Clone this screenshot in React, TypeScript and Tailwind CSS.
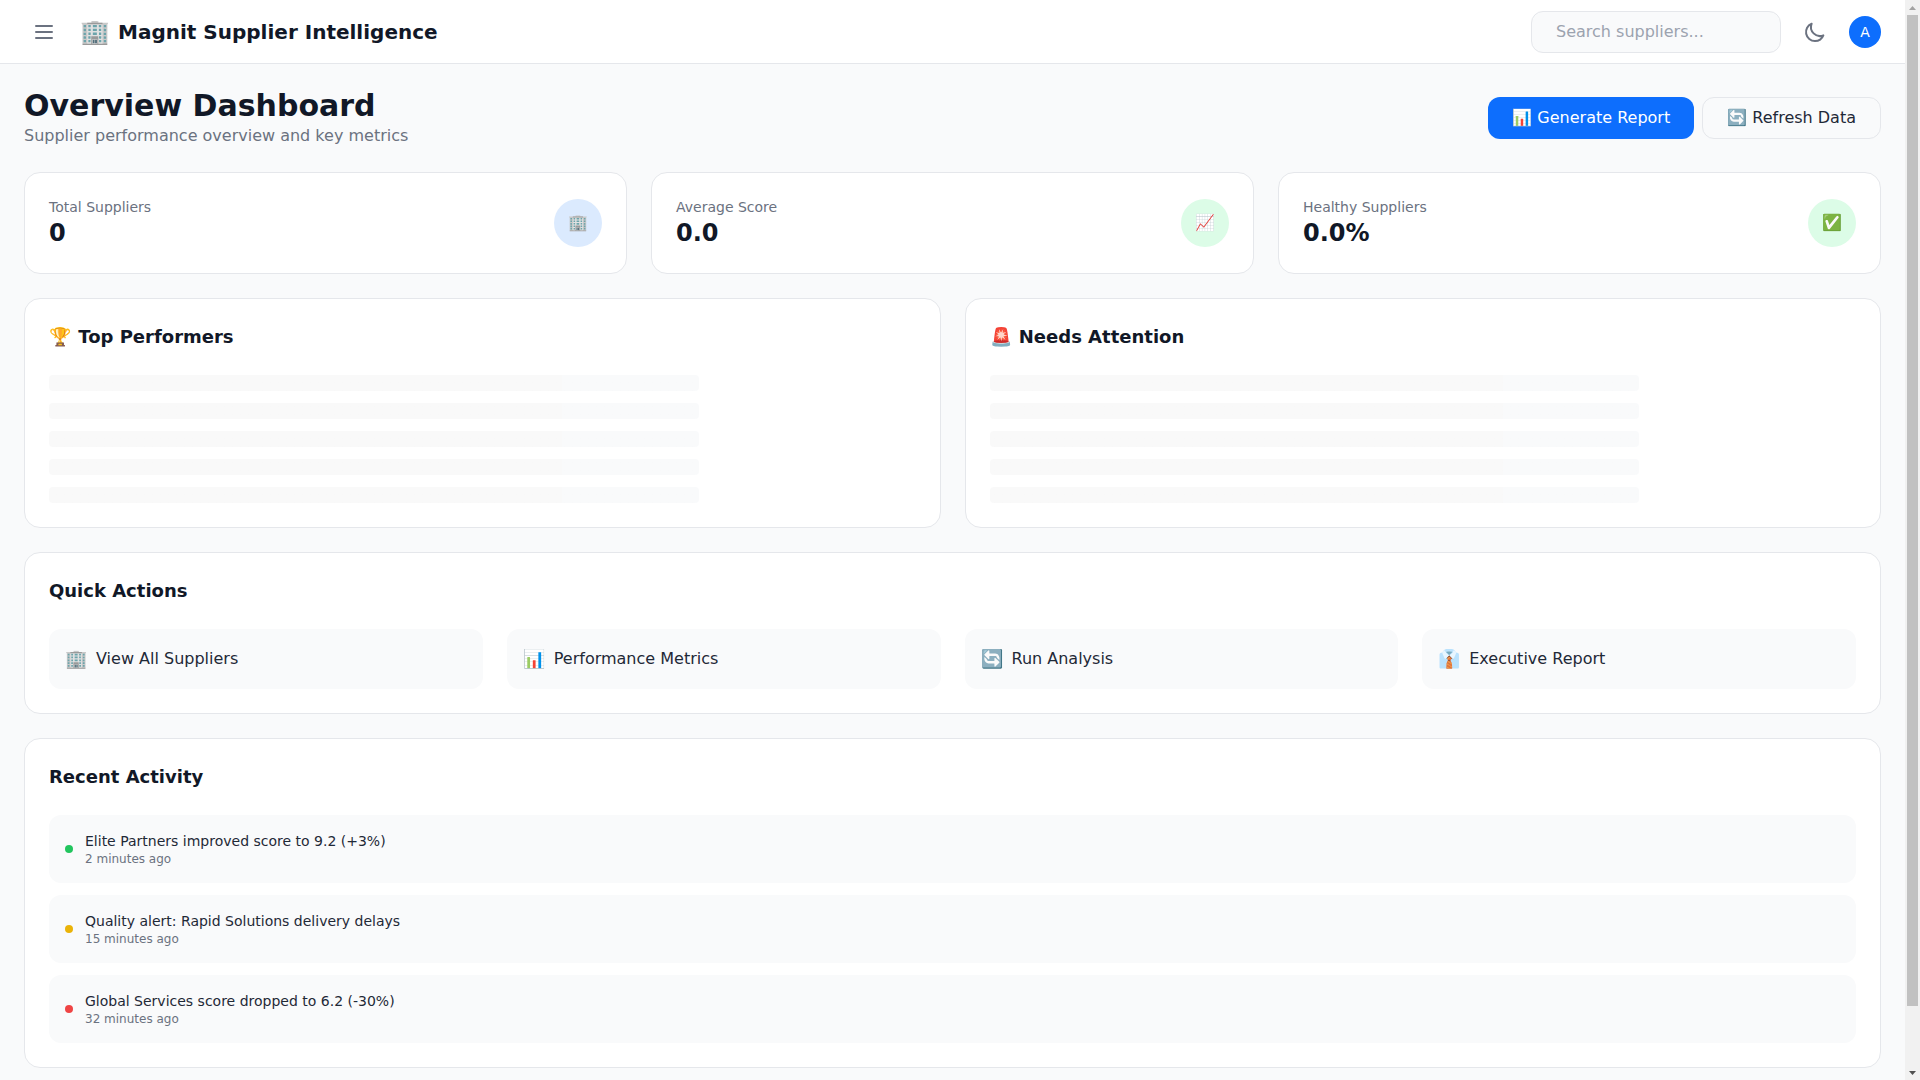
import type { ReactNode } from "react";

const Card = ({ className = "", children }: { className?: string; children: ReactNode }) => (
  <div className={`bg-white border border-[#e5e7eb] rounded-2xl p-6 ${className}`}>{children}</div>
);

const Skeletons = () => (
  <div className="flex flex-col gap-3">
    {[0, 1, 2, 3, 4].map((i) => (
      <div
        key={i}
        className="h-4 w-3/4 rounded bg-linear-to-r from-[#f9f9f9] from-[79%] to-[#f9fafb] to-[79%]"
      />
    ))}
  </div>
);

// the window's scrollbar as it stands in the picture
const Scrollbar = () => (
  <div className="w-[15px] shrink-0 h-full flex flex-col bg-[#f1f1f1]">
    <div className="h-[15px] shrink-0 flex items-center justify-center">
      <svg width="7" height="4" viewBox="0 0 7 4">
        <path d="M3.5 0L7 4H0z" fill="#a3a3a3" />
      </svg>
    </div>
    <div className="h-[991px] mx-[2px] bg-[#c1c1c1]" />
    <div className="flex-1" />
    <div className="h-[15px] shrink-0 flex items-center justify-center">
      <svg width="7" height="4" viewBox="0 0 7 4">
        <path d="M0 0H7L3.5 4z" fill="#505050" />
      </svg>
    </div>
  </div>
);

const stats = [
  { label: "Total Suppliers", value: "0", icon: "🏢", bg: "bg-[#dbeafe]" },
  { label: "Average Score", value: "0.0", icon: "📈", bg: "bg-[#dcfce7]" },
  { label: "Healthy Suppliers", value: "0.0%", icon: "✅", bg: "bg-[#dcfce7]" },
];

const actions = [
  { icon: "🏢", label: "View All Suppliers" },
  { icon: "📊", label: "Performance Metrics" },
  { icon: "🔄", label: "Run Analysis" },
  { icon: "👔", label: "Executive Report" },
];

const activity = [
  { dot: "bg-[#22c55e]", text: "Elite Partners improved score to 9.2 (+3%)", time: "2 minutes ago" },
  { dot: "bg-[#eab308]", text: "Quality alert: Rapid Solutions delivery delays", time: "15 minutes ago" },
  { dot: "bg-[#ef4444]", text: "Global Services score dropped to 6.2 (-30%)", time: "32 minutes ago" },
];

export default function App() {
  return (
    <div className="h-screen flex overflow-hidden bg-[#f9fafb] text-[#111827] font-['DejaVu_Sans',sans-serif]">
      <div className="flex-1 min-w-0 h-full overflow-hidden">
        <header className="h-16 bg-white border-b border-[#e5e7eb] px-6 flex items-center justify-between">
          <div className="flex items-center gap-4">
            <button className="p-2 text-[#6b7280]">
              <svg className="w-6 h-6" fill="none" viewBox="0 0 24 24" stroke="currentColor" strokeWidth={2}>
                <path strokeLinecap="round" strokeLinejoin="round" d="M4 6h16M4 12h16M4 18h16" />
              </svg>
            </button>
            <div className="flex items-center gap-2 text-xl font-bold">
              <span className="text-2xl">🏢</span>
              <span>Magnit Supplier Intelligence</span>
            </div>
          </div>
          <div className="flex items-center gap-4">
            <input
              placeholder="Search suppliers..."
              className="w-[250px] h-[42px] px-6 bg-[#f9fafb] border border-[#e5e7eb] rounded-xl text-base placeholder:text-[#9ca3af] outline-none"
            />
            <button className="w-9 h-9 flex items-center justify-center text-[#6b7280]">
              <svg className="w-6 h-6" fill="none" viewBox="0 0 24 24" stroke="currentColor" strokeWidth={2}>
                <path strokeLinecap="round" strokeLinejoin="round" d="M20.354 15.354A9 9 0 018.646 3.646 9.003 9.003 0 0012 21a9.003 9.003 0 008.354-5.646z" />
              </svg>
            </button>
            <div className="w-8 h-8 rounded-full bg-[#0d6efd] text-white text-sm flex items-center justify-center">A</div>
          </div>
        </header>

        <main className="p-6">
          <div className="flex items-center justify-between mb-6">
            <div>
              <h1 className="text-3xl font-bold">Overview Dashboard</h1>
              <p className="text-[#6b7280]">Supplier performance overview and key metrics</p>
            </div>
            <div className="flex gap-2">
              <button className="px-6 py-2 bg-[#0d6efd] text-white rounded-xl">📊 Generate Report</button>
              <button className="px-6 py-2 border border-[#e5e7eb] bg-[#f9fafb] text-[#1f2937] rounded-xl">🔄 Refresh Data</button>
            </div>
          </div>

          <div className="grid grid-cols-3 gap-6 mb-6">
            {stats.map((s) => (
              <Card key={s.label} className="flex items-center justify-between">
                <div>
                  <div className="text-sm text-[#6b7280]">{s.label}</div>
                  <div className="text-2xl font-bold">{s.value}</div>
                </div>
                <div className={`w-12 h-12 rounded-full flex items-center justify-center text-base ${s.bg}`}>{s.icon}</div>
              </Card>
            ))}
          </div>

          <div className="grid grid-cols-2 gap-6 mb-6">
            <Card>
              <h3 className="text-lg font-bold mb-6"><span className="mr-px">🏆</span> Top Performers</h3>
              <Skeletons />
            </Card>
            <Card>
              <h3 className="text-lg font-bold mb-6"><span className="mr-px">🚨</span> Needs Attention</h3>
              <Skeletons />
            </Card>
          </div>

          <Card className="mb-6">
            <h3 className="text-lg font-bold mb-6">Quick Actions</h3>
            <div className="grid grid-cols-4 gap-6">
              {actions.map((a) => (
                <button key={a.label} className="h-[60px] px-4 flex items-center gap-[9px] bg-[#f9fafb] text-[#1f2937] rounded-xl text-left">
                  <span className="text-lg">{a.icon}</span>
                  <span>{a.label}</span>
                </button>
              ))}
            </div>
          </Card>

          <Card>
            <h3 className="text-lg font-bold mb-6">Recent Activity</h3>
            <div className="flex flex-col gap-3">
              {activity.map((a) => (
                <div key={a.text} className="flex items-center gap-3 p-4 bg-[#f9fafb] rounded-xl">
                  <div className={`w-2 h-2 rounded-full ${a.dot}`} />
                  <div>
                    <div className="text-sm text-[#1f2937]">{a.text}</div>
                    <div className="text-xs text-[#6b7280]">{a.time}</div>
                  </div>
                </div>
              ))}
            </div>
          </Card>
        </main>
      </div>
      <Scrollbar />
    </div>
  );
}
